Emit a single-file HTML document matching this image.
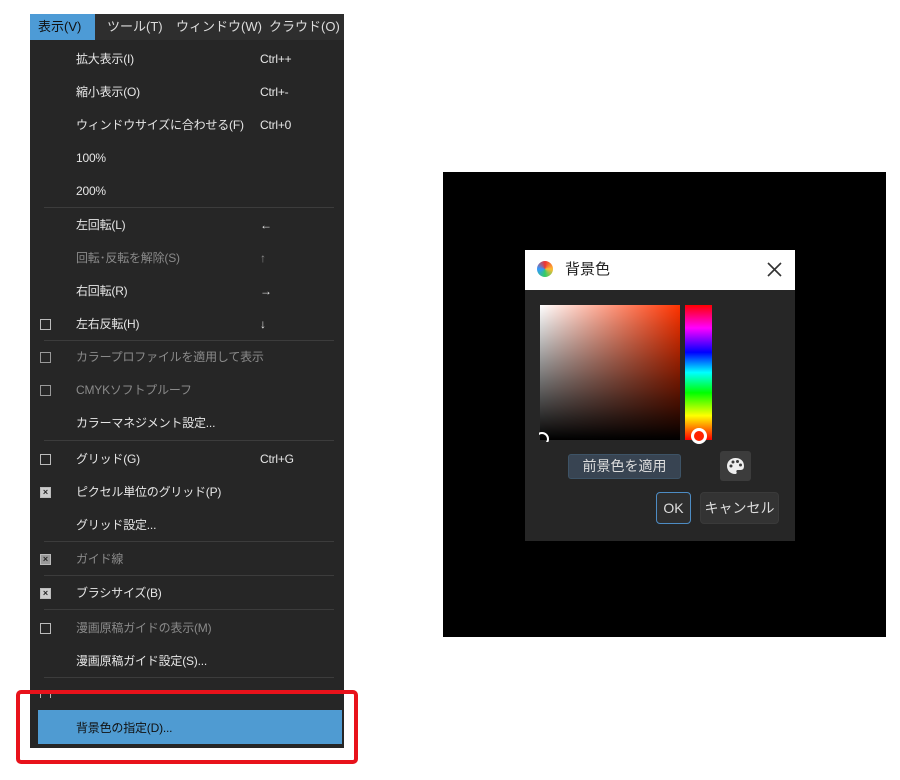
<!DOCTYPE html>
<html><head><meta charset="utf-8"><style>
body{margin:0;width:900px;height:780px;background:#fff;position:relative;overflow:hidden;font-family:"Liberation Sans","Noto Sans CJK JP",sans-serif;}
.menu{position:absolute;left:30px;top:14px;width:314px;height:734px;background:#262626;}
.bar{position:absolute;left:0;top:0;width:314px;height:26px;background:#2e2e2e;color:#ddd;font-size:13px;}
.bar span{position:absolute;top:5px;line-height:16px}
.it,.sc{position:absolute;color:#e6e6e6;font-size:12px;line-height:16px;height:16px;white-space:nowrap;letter-spacing:-0.2px}
.it{left:46px}
.sc{left:230px}
.dim{color:#8a8a8a}
.sep{position:absolute;left:14px;width:290px;height:1px;background:#3c3c3c}
.cb{position:absolute;left:10px;width:11px;height:11px;border:1px solid #bbb;box-sizing:border-box}
.cbx{background:#ccc;color:#262626;font-size:9px;line-height:9px;text-align:center;font-weight:bold}
</style></head><body>
<div class="menu">
<div class="bar"><span style="left:0;top:0;height:26px;width:65px;background:#4d9bd6;"></span><span style="left:8px;color:#111">表示(V)</span><span style="left:77px">ツール(T)</span><span style="left:146px">ウィンドウ(W)</span><span style="left:239px">クラウド(O)</span></div>
<div class="it" style="top:37px">拡大表示(I)</div><div class="sc" style="top:37px">Ctrl++</div>
<div class="it" style="top:70px">縮小表示(O)</div><div class="sc" style="top:70px">Ctrl+-</div>
<div class="it" style="top:103px">ウィンドウサイズに合わせる(F)</div><div class="sc" style="top:103px">Ctrl+0</div>
<div class="it" style="top:136px">100%</div>
<div class="it" style="top:169px">200%</div>
<div class="sep" style="top:193px"></div>
<div class="it" style="top:203px">左回転(L)</div><div class="sc" style="top:203px">←</div>
<div class="it dim" style="top:236px">回転･反転を解除(S)</div><div class="sc dim" style="top:236px">↑</div>
<div class="it" style="top:269px">右回転(R)</div><div class="sc" style="top:269px">→</div>
<div class="cb" style="top:305px"></div><div class="it" style="top:302px">左右反転(H)</div><div class="sc" style="top:302px">↓</div>
<div class="sep" style="top:326px"></div>
<div class="cb" style="top:338px;border-color:#999"></div><div class="it dim" style="top:335px">カラープロファイルを適用して表示</div>
<div class="cb" style="top:371px;border-color:#999"></div><div class="it dim" style="top:368px">CMYKソフトプルーフ</div>
<div class="it" style="top:401px">カラーマネジメント設定...</div>
<div class="sep" style="top:426px"></div>
<div class="cb" style="top:440px"></div><div class="it" style="top:437px">グリッド(G)</div><div class="sc" style="top:437px">Ctrl+G</div>
<div class="cb cbx" style="top:473px">×</div><div class="it" style="top:470px">ピクセル単位のグリッド(P)</div>
<div class="it" style="top:503px">グリッド設定...</div>
<div class="sep" style="top:527px"></div>
<div class="cb cbx" style="top:540px;background:#999">×</div><div class="it dim" style="top:537px">ガイド線</div>
<div class="sep" style="top:561px"></div>
<div class="cb cbx" style="top:574px">×</div><div class="it" style="top:571px">ブラシサイズ(B)</div>
<div class="sep" style="top:595px"></div>
<div class="cb" style="top:609px"></div><div class="it dim" style="top:606px">漫画原稿ガイドの表示(M)</div>
<div class="it" style="top:639px">漫画原稿ガイド設定(S)...</div>
<div class="sep" style="top:663px"></div>
<div class="cb" style="top:679px;height:5px;border-bottom:none"></div>
<div style="position:absolute;left:8px;top:696px;width:304px;height:34px;background:#4f9bd2;"></div>
<div class="it" style="top:706px;color:#111">背景色の指定(D)...</div>
</div>
<div style="position:absolute;left:16px;top:690px;width:334px;height:66px;border:4px solid #e8121b;border-radius:5px;"></div>
<div style="position:absolute;left:443px;top:172px;width:443px;height:465px;background:#000"></div>
<div style="position:absolute;left:525px;top:250px;width:270px;height:291px;background:#262626;">
 <div style="height:40px;background:#fff;position:relative;">
  <div style="position:absolute;left:12px;top:11px;width:16px;height:16px;border-radius:50%;background:conic-gradient(#e33,#fb3,#3c6,#39f,#e33)"></div>
  <div style="position:absolute;left:40px;top:10px;font-size:15px;line-height:20px;color:#222">背景色</div>
  <svg style="position:absolute;left:242px;top:12px" width="15" height="15" viewBox="0 0 15 15"><path d="M1 1L14 14M14 1L1 14" stroke="#333" stroke-width="1.6"/></svg>
 </div>
 <div style="position:absolute;left:15px;top:55px;width:140px;height:135px;background:linear-gradient(to bottom,transparent,#000),linear-gradient(to right,#fff,#ff3300)"></div>
 <div style="position:absolute;left:10px;top:182px;width:10px;height:10px;border:2px solid #fff;border-radius:50%;clip-path:inset(0 0 4px 4px)"></div>
 <div style="position:absolute;left:160px;top:55px;width:27px;height:135px;background:linear-gradient(to bottom,#f00,#f0f 17%,#00f 35%,#0ff 50%,#0f0 65%,#ff0 82%,#f00)"></div>
 <div style="position:absolute;left:166px;top:178px;width:10px;height:10px;border:3px solid #fff;border-radius:50%;background:#f20"></div>
 <div style="position:absolute;left:43px;top:204px;width:113px;height:25px;background:#384452;border:1px solid #3d5366;box-sizing:border-box;border-radius:3px;color:#ddd;font-size:14px;text-align:center;line-height:23px">前景色を適用</div>
 <div style="position:absolute;left:195px;top:201px;width:31px;height:30px;background:#3c3c3c;border-radius:3px;">
  <svg style="position:absolute;left:6px;top:6px" width="19" height="18" viewBox="0 0 19 18"><path d="M9.5 1C4.5 1 1 4.5 1 9s3.5 8 8 8c1.5 0 2-1 1.5-2s0-2 1.5-2h2.5c2.5 0 3.5-1.5 3.5-4C18 4 14.5 1 9.5 1z" fill="#eee"/><circle cx="5" cy="9" r="1.5" fill="#3c3c3c"/><circle cx="7" cy="5" r="1.5" fill="#3c3c3c"/><circle cx="11.5" cy="4.5" r="1.5" fill="#3c3c3c"/><circle cx="14.5" cy="8" r="1.5" fill="#3c3c3c"/></svg>
 </div>
 <div style="position:absolute;left:131px;top:242px;width:35px;height:32px;border:1px solid #4d8cc4;box-sizing:border-box;border-radius:4px;background:#2e2e2e;color:#ddd;font-size:14px;text-align:center;line-height:30px">OK</div>
 <div style="position:absolute;left:175px;top:242px;width:79px;height:32px;border:1px solid #3a3a3a;box-sizing:border-box;border-radius:4px;background:#333;color:#ddd;font-size:14px;text-align:center;line-height:30px">キャンセル</div>
</div>
</body></html>
